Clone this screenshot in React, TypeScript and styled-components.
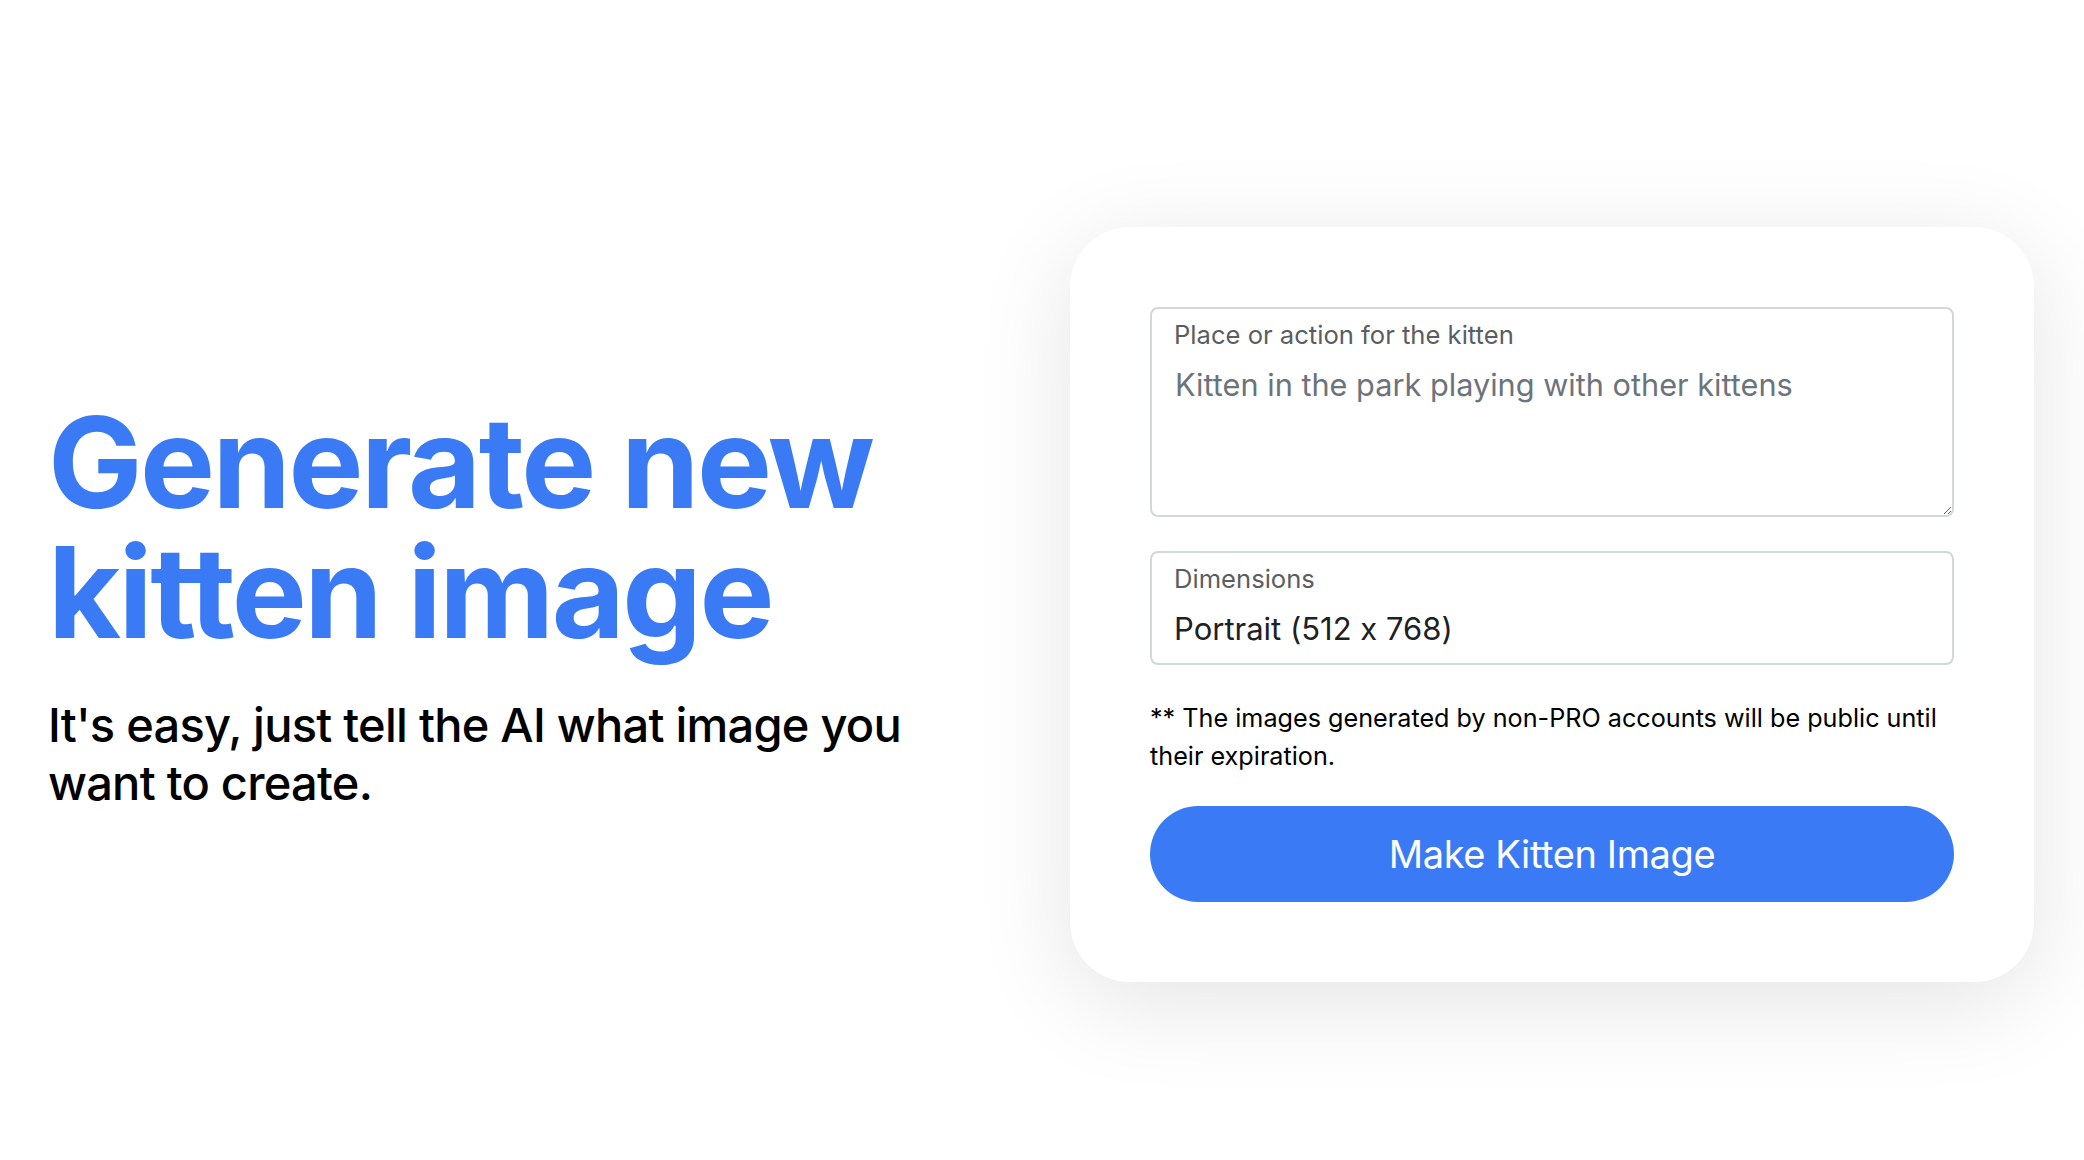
import React from "react";
import styled, { createGlobalStyle } from "styled-components";

const GlobalStyle = createGlobalStyle`
  html, body {
    margin: 0;
    padding: 0;
    background: #ffffff;
    font-family: Inter, "Noto Sans", "Liberation Sans", sans-serif;
    color: #212529;
  }
  * { box-sizing: border-box; }
`;

const Page = styled.main`
  min-height: 1160px;
  display: flex;
  align-items: center;
  justify-content: space-between;
  padding: 48px 50px 0 48px;
`;

const Intro = styled.section`
  flex: 1;
  display: flex;
  flex-direction: column;
  gap: 39px;
`;

const Heading = styled.h1`
  margin: 0;
  font-family: Inter, "Liberation Sans", sans-serif;
  font-weight: 700;
  font-size: 126px;
  line-height: 130px;
  letter-spacing: -0.02em;
  color: #3a7bf5;
`;

const Lead = styled.p`
  margin: 0;
  max-width: 920px;
  font-family: Inter, "Liberation Sans", sans-serif;
  font-weight: 500;
  font-size: 47px;
  line-height: 58px;
  letter-spacing: -0.016em;
  color: #000000;
`;

const Card = styled.form`
  width: 964px;
  flex-shrink: 0;
  background: #ffffff;
  border-radius: 60px;
  padding: 80px;
  box-shadow: 0 20px 100px rgba(0, 0, 0, 0.11);
  display: flex;
  flex-direction: column;
  font-feature-settings: "calt" 0;
`;

const Floating = styled.div<{ $gap?: number }>`
  position: relative;
  margin-bottom: ${(p) => p.$gap ?? 0}px;
`;

const FloatLabel = styled.label`
  position: absolute;
  top: 10px;
  left: 24px;
  font-size: 25.6px;
  line-height: 35px;
  color: #5a5d61;
  pointer-events: none;
`;

const TextArea = styled.textarea`
  display: block;
  width: 100%;
  height: 210px;
  margin: 0;
  border: 2px solid #d3d7dc;
  border-radius: 8px;
  padding: 54px 22px 10px 23px;
  font-family: inherit;
  font-feature-settings: "calt" 0;
  font-size: 30.7px;
  line-height: 44px;
  color: #212529;
  background: #fff;
  resize: vertical;
  outline: none;

  &::placeholder {
    color: #6c737b;
    opacity: 1;
  }
`;

const Select = styled.select`
  display: block;
  width: 100%;
  height: 114px;
  margin: 0;
  border: 2px solid #d3d7dc;
  border-radius: 8px;
  padding: 54px 22px 12px 22px;
  font-family: inherit;
  font-feature-settings: "calt" 0;
  font-size: 31px;
  line-height: 44px;
  color: #1d2024;
  background: #fff;
  appearance: none;
  -webkit-appearance: none;
  outline: none;
`;

const Note = styled.p`
  margin: 0 0 31px 0;
  font-size: 25.2px;
  line-height: 38px;
  color: #000;
`;

const Submit = styled.button`
  height: 96px;
  width: 100%;
  border: none;
  border-radius: 48px;
  background: #3a7bf5;
  color: #ffffff;
  font-family: inherit;
  font-size: 38px;
  font-weight: 400;
  letter-spacing: -0.01em;
  cursor: pointer;
`;

export default function App() {
  return (
    <>
      <GlobalStyle />
      <Page>
        <Intro>
          <Heading>
            Generate new
            <br />
            kitten image
          </Heading>
          <Lead>It's easy, just tell the AI what image you want to create.</Lead>
        </Intro>
        <Card onSubmit={(e) => e.preventDefault()}>
          <Floating $gap={34}>
            <TextArea id="prompt" placeholder="Kitten in the park playing with other kittens" />
            <FloatLabel htmlFor="prompt">Place or action for the kitten</FloatLabel>
          </Floating>
          <Floating $gap={34}>
            <Select id="dims" defaultValue="portrait">
              <option value="portrait">Portrait (512 x 768)</option>
              <option value="landscape">Landscape (768 x 512)</option>
              <option value="square">Square (512 x 512)</option>
            </Select>
            <FloatLabel htmlFor="dims">Dimensions</FloatLabel>
          </Floating>
          <Note>
            ** The images generated by non-PRO accounts will be public until their expiration.
          </Note>
          <Submit type="submit">Make Kitten Image</Submit>
        </Card>
      </Page>
    </>
  );
}
